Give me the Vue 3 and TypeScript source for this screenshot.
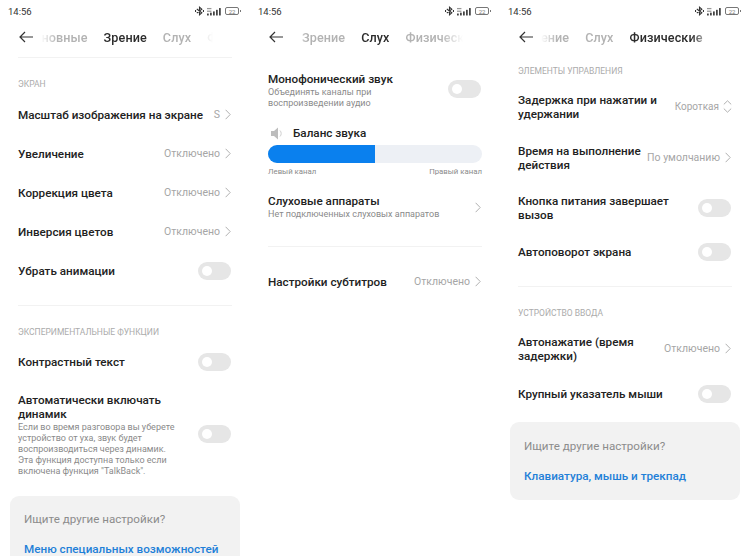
<script setup lang="ts">
interface Tab {
  label: string;
  active?: boolean;
}

const panels: { tabs: Tab[]; offset: string; battery: string }[] = [
  { tabs: [{ label: 'Основные' }, { label: 'Зрение', active: true }, { label: 'Слух' }, { label: 'Физические' }], offset: 'off-a', battery: '22' },
  { tabs: [{ label: 'Зрение' }, { label: 'Слух', active: true }, { label: 'Физические' }], offset: 'off-b', battery: '22' },
  { tabs: [{ label: 'Зрение' }, { label: 'Слух' }, { label: 'Физические', active: true }], offset: 'off-c', battery: '22' }
];
</script>

<template>
  <div class="screens">
    <section v-for="(panel, i) in panels" :key="i" class="panel">
      <div class="status">
        <span class="time">14:56</span>
        <span class="status-icons">
          <svg width="9" height="10" viewBox="0 0 10 10" fill="none" stroke="#333" stroke-width="1.2"><path d="M2 2.8 7.6 7 5 9.2V.8L7.6 3 2 7.2" /><path d="M.6 4v2M9.4 4v2" /></svg>
          <svg width="15" height="9" viewBox="0 0 17 9"><g fill="#444"><rect x="0" y="0.5" width="5" height="1.4" opacity=".55" /><rect x="0" y="3.5" width="5" height="1.4" opacity=".55" /><rect x="0" y="6.8" width="2" height="2.2" /><rect x="3.4" y="5.8" width="2" height="3.2" /><rect x="6.8" y="4.4" width="2" height="4.6" /><rect x="10.2" y="2.6" width="2" height="6.4" /><rect x="13.6" y="0.6" width="2" height="8.4" /></g></svg>
          <span class="battery"><span class="battery-num">{{ panel.battery }}</span></span>
        </span>
      </div>

      <header class="nav">
        <svg class="back" width="14" height="12" viewBox="0 0 14 12" fill="none" stroke="#333" stroke-width="1.2"><path d="M14 6H1M6 1 1 6l5 5" /></svg>
        <div class="tabs">
          <div class="track" :class="panel.offset">
            <span v-for="tab in panel.tabs" :key="tab.label" class="tab" :class="{ active: tab.active }">{{ tab.label }}</span>
          </div>
        </div>
      </header>

      <!-- Зрение -->
      <div v-if="i === 0" class="body">
        <div class="line"></div>
        <div class="section-title first">ЭКРАН</div>
        <div class="row">
          <span class="label">Масштаб изображения на экране</span>
          <span class="value">S<svg class="chev" width="6" height="11" viewBox="0 0 6 11" fill="none"><path d="m.6.8 4.6 4.7L.6 10.2" /></svg></span>
        </div>
        <div class="row">
          <span class="label">Увеличение</span>
          <span class="value">Отключено<svg class="chev" width="6" height="11" viewBox="0 0 6 11" fill="none"><path d="m.6.8 4.6 4.7L.6 10.2" /></svg></span>
        </div>
        <div class="row">
          <span class="label">Коррекция цвета</span>
          <span class="value">Отключено<svg class="chev" width="6" height="11" viewBox="0 0 6 11" fill="none"><path d="m.6.8 4.6 4.7L.6 10.2" /></svg></span>
        </div>
        <div class="row">
          <span class="label">Инверсия цветов</span>
          <span class="value">Отключено<svg class="chev" width="6" height="11" viewBox="0 0 6 11" fill="none"><path d="m.6.8 4.6 4.7L.6 10.2" /></svg></span>
        </div>
        <div class="row">
          <span class="label">Убрать анимации</span>
          <span class="toggle"></span>
        </div>
        <div class="line gap-a"></div>
        <div class="section-title second">ЭКСПЕРИМЕНТАЛЬНЫЕ ФУНКЦИИ</div>
        <div class="row">
          <span class="label">Контрастный текст</span>
          <span class="toggle"></span>
        </div>
        <div class="row tall speaker">
          <div class="text narrow">
            <div class="label">Автоматически включать динамик</div>
            <div class="sub">Если во время разговора вы уберете устройство от уха, звук будет воспроизводиться через динамик. Эта функция доступна только если включена функция "TalkBack".</div>
          </div>
          <span class="toggle"></span>
        </div>
        <div class="card card-a">
          <div class="card-title">Ищите другие настройки?</div>
          <div class="card-link">Меню специальных возможностей</div>
        </div>
      </div>

      <!-- Слух -->
      <div v-else-if="i === 1" class="body">
        <div class="row tall mono">
          <div class="text narrow">
            <div class="label">Монофонический звук</div>
            <div class="sub">Объединять каналы при воспроизведении аудио</div>
          </div>
          <span class="toggle"></span>
        </div>
        <div class="balance">
          <svg width="13" height="13" viewBox="0 0 13 13"><path d="M0 4h3l4-3.5v12L3 9H0z" fill="#bdbdbd" /><path d="M9 3.5c1.6 1.6 1.6 4.4 0 6" fill="none" stroke="#cfcfcf" stroke-width="1" /></svg>
          <span class="label">Баланс звука</span>
        </div>
        <div class="bar"><div class="bar-fill"></div></div>
        <div class="bar-labels"><span>Левый канал</span><span>Правый канал</span></div>
        <div class="row tall aids">
          <div class="text">
            <div class="label">Слуховые аппараты</div>
            <div class="sub">Нет подключенных слуховых аппаратов</div>
          </div>
          <svg class="chev" width="6" height="11" viewBox="0 0 6 11" fill="none"><path d="m.6.8 4.6 4.7L.6 10.2" /></svg>
        </div>
        <div class="line gap-b"></div>
        <div class="row subs">
          <span class="label">Настройки субтитров</span>
          <span class="value">Отключено<svg class="chev" width="6" height="11" viewBox="0 0 6 11" fill="none"><path d="m.6.8 4.6 4.7L.6 10.2" /></svg></span>
        </div>
      </div>

      <!-- Физические -->
      <div v-else class="body">
        <div class="section-title third">ЭЛЕМЕНТЫ УПРАВЛЕНИЯ</div>
        <div class="row double">
          <span class="label wrap-a">Задержка при нажатии и удержании</span>
          <span class="value short">Короткая<svg class="updown" width="9" height="13" viewBox="0 0 9 13" fill="none"><path d="m.8 4.4 3.7-3.6 3.7 3.6M.8 8.6l3.7 3.6 3.7-3.6" /></svg></span>
        </div>
        <div class="row double">
          <span class="label wrap-b">Время на выполнение действия</span>
          <span class="value">По умолчанию<svg class="chev" width="6" height="11" viewBox="0 0 6 11" fill="none"><path d="m.6.8 4.6 4.7L.6 10.2" /></svg></span>
        </div>
        <div class="row double power">
          <span class="label wrap-a">Кнопка питания завершает вызов</span>
          <span class="toggle"></span>
        </div>
        <div class="row rotate">
          <span class="label">Автоповорот экрана</span>
          <span class="toggle"></span>
        </div>
        <div class="line gap-c"></div>
        <div class="section-title fourth">УСТРОЙСТВО ВВОДА</div>
        <div class="row double">
          <span class="label wrap-b">Автонажатие (время задержки)</span>
          <span class="value">Отключено<svg class="chev" width="6" height="11" viewBox="0 0 6 11" fill="none"><path d="m.6.8 4.6 4.7L.6 10.2" /></svg></span>
        </div>
        <div class="row">
          <span class="label">Крупный указатель мыши</span>
          <span class="toggle"></span>
        </div>
        <div class="card card-c">
          <div class="card-title">Ищите другие настройки?</div>
          <div class="card-link">Клавиатура, мышь и трекпад</div>
        </div>
      </div>
    </section>
  </div>
</template>

<style>
html,
body {
  margin: 0;
  background: #fff;
}
</style>

<style scoped>
.screens {
  display: flex;
  width: 750px;
  height: 556px;
  overflow: hidden;
  font-family: Roboto, "Noto Sans", sans-serif;
  color: #222;
}

.panel {
  width: 250px;
  flex: none;
  overflow: hidden;
}

.status {
  display: flex;
  justify-content: space-between;
  align-items: center;
  height: 22px;
  padding: 0 9px 0 8px;
}

.time {
  font-size: 9.5px;
  color: #333;
}

.status-icons {
  display: flex;
  align-items: center;
  gap: 3px;
}

.battery {
  position: relative;
  width: 12px;
  height: 6px;
  border: 1px solid #777;
  border-radius: 2px;
  display: flex;
  align-items: center;
  justify-content: center;
  margin-right: 2px;
}

.battery::after {
  content: "";
  position: absolute;
  right: -3px;
  top: 2px;
  width: 1px;
  height: 2px;
  background: #777;
}

.battery-num {
  font-size: 6px;
  color: #777;
}

.nav {
  display: flex;
  align-items: center;
  height: 30px;
  padding-left: 19px;
}

.back {
  flex: none;
}

.tabs {
  width: 175px;
  margin-left: 8px;
  overflow: hidden;
  -webkit-mask-image: linear-gradient(to right, transparent 0, #000 16px, #000 150px, transparent 172px);
  mask-image: linear-gradient(to right, transparent 0, #000 16px, #000 150px, transparent 172px);
}

.track {
  display: flex;
  gap: 16px;
  white-space: nowrap;
}

.off-a {
  margin-left: -15px;
}

.off-b {
  margin-left: 11px;
}

.off-c {
  margin-left: -15px;
}

.tab {
  font-size: 12.6px;
  font-weight: 500;
  color: #b3b3b3;
  letter-spacing: 0.1px;
}

.tab.active {
  color: #2c2c2c;
}

.body {
  padding: 0 18px;
}

.line {
  height: 1px;
  background: #f2f2f2;
  margin-top: 5px;
}

.gap-a {
  margin-top: 15px;
}

.gap-b {
  margin-top: 26px;
}

.gap-c {
  margin-top: 15px;
}

.section-title {
  font-size: 8.5px;
  line-height: 12px;
  color: #ababab;
}

.first {
  margin-top: 20px;
  margin-bottom: 5px;
}

.second {
  margin-top: 20px;
  margin-bottom: 4px;
}

.third {
  margin-top: 13px;
  margin-bottom: 4px;
}

.fourth {
  margin-top: 20px;
  margin-bottom: 4px;
}

.row {
  display: flex;
  justify-content: space-between;
  align-items: center;
  height: 39px;
}

.row.tall {
  height: auto;
}

.row.tall .toggle {
  margin-bottom: 3px;
}

.row.double {
  height: 51px;
}

.power {
  margin-top: -1px;
}

.rotate {
  margin-top: -1px;
}

.label {
  font-size: 11.7px;
  line-height: 14px;
  font-weight: 500;
  color: #222;
}

.wrap-a {
  width: 155px;
}

.wrap-b {
  width: 130px;
}

.sub {
  font-size: 9px;
  line-height: 11px;
  color: #8a8a8a;
  margin-top: 1px;
}

.text.narrow {
  width: 165px;
}

.value {
  display: flex;
  align-items: center;
  flex: none;
  font-size: 10.5px;
  color: #a6a6a6;
}

.value.short {
  font-size: 10px;
}

.chev {
  flex: none;
  margin-left: 5px;
  margin-right: 1px;
  stroke: #b0b0b0;
  stroke-width: 1;
}

.updown {
  flex: none;
  margin-left: 4px;
  stroke: #b0b0b0;
  stroke-width: 1;
}

.toggle {
  position: relative;
  flex: none;
  width: 33px;
  height: 18px;
  margin-right: 1px;
  border-radius: 9px;
  background: #e6e6e6;
}

.toggle::after {
  content: "";
  position: absolute;
  left: 4px;
  top: 4px;
  width: 10px;
  height: 10px;
  border-radius: 50%;
  background: #fff;
}

.speaker {
  margin-top: 12px;
}

.mono {
  margin-top: 20px;
}

.balance {
  display: flex;
  align-items: center;
  gap: 9px;
  margin-top: 17px;
  margin-left: 3px;
}

.bar {
  height: 18px;
  margin-top: 5px;
  border-radius: 9px;
  background: #edf0f5;
  overflow: hidden;
}

.bar-fill {
  width: 50%;
  height: 100%;
  background: #0a80ee;
}

.bar-labels {
  display: flex;
  justify-content: space-between;
  margin-top: 3px;
  font-size: 7.8px;
  line-height: 12px;
  color: #8a8a8a;
}

.aids {
  margin-top: 16px;
}

.subs {
  margin-top: 15px;
}

.card {
  box-sizing: border-box;
  border-radius: 9px;
  background: #f2f2f2;
  margin-left: -8px;
  margin-right: -8px;
  padding: 16px 14px 0;
}

.card-a {
  height: 80px;
  margin-top: 19px;
  padding-top: 15px;
}

.card-c {
  height: 78px;
  margin-top: 9px;
}

.card-title {
  font-size: 11.6px;
  line-height: 16px;
  color: #8c8c8c;
}

.card-link {
  margin-top: 14px;
  font-size: 11.7px;
  line-height: 16px;
  font-weight: 500;
  color: #1f80d8;
}
</style>
